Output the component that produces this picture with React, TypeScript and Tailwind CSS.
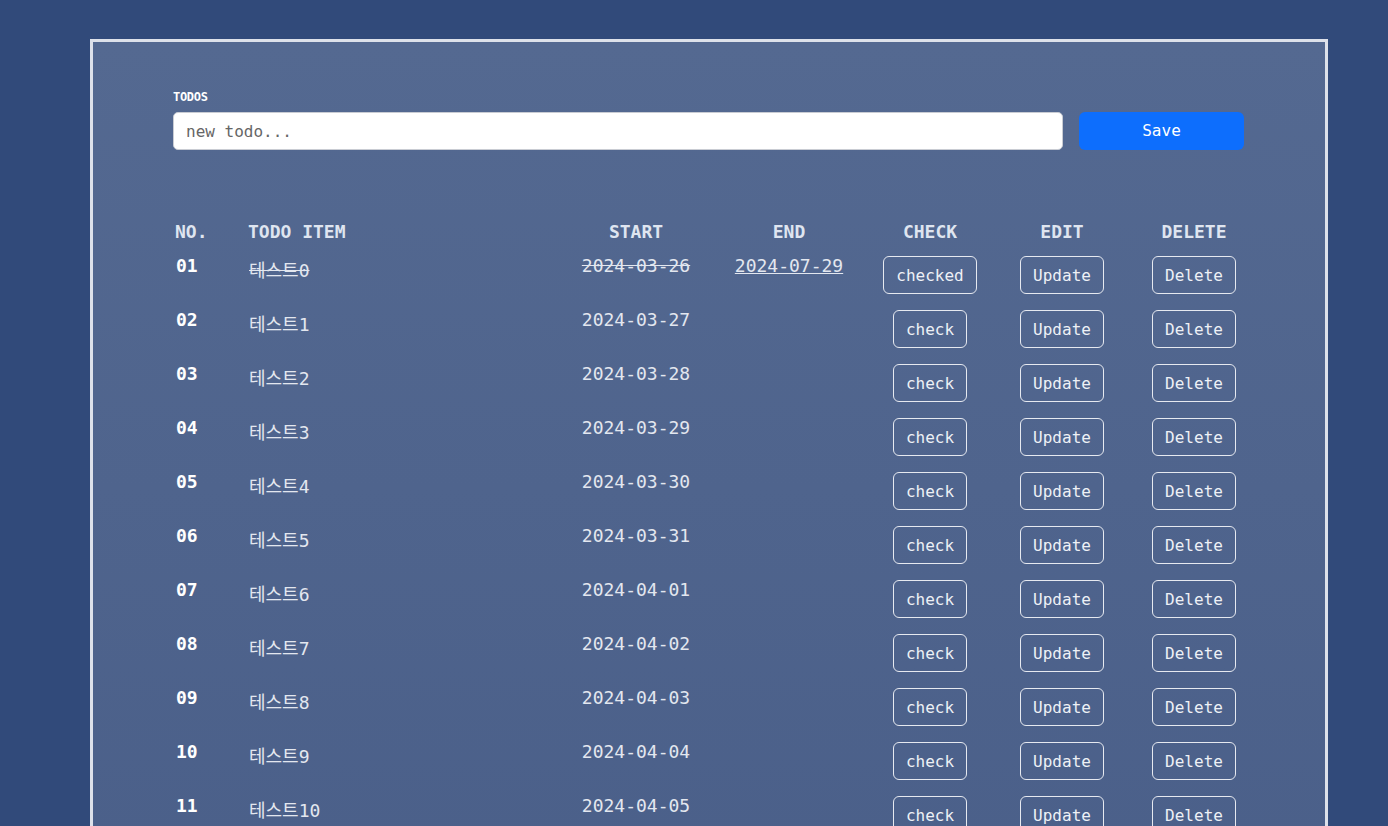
const todos = Array.from({ length: 11 }, (_, i) => {
  const start = new Date(2024, 2, 26 + i);
  const pad = (n: number) => String(n).padStart(2, "0");
  return {
    no: pad(i + 1),
    item: `테스트${i}`,
    start: `${start.getFullYear()}-${pad(start.getMonth() + 1)}-${pad(start.getDate())}`,
    end: i === 0 ? "2024-07-29" : "",
    checked: i === 0,
  };
});

const btn =
  "h-[38px] px-3 rounded-md border border-[#e6e9f0] text-[16px] text-[#eef1f6] bg-transparent";

const App = () => {
  return (
    <div
      className="min-h-screen w-full bg-[#314a7a] pt-[39px] overflow-hidden"
      style={{ fontFamily: '"DejaVu Sans Mono", "Noto Sans CJK KR", monospace' }}
    >
      <div className="ml-[90px] w-[1238px] h-[900px] border-[3px] border-[#dde1ea] bg-gradient-to-b from-[#546991] to-[#4a5f89] px-[80px] pt-[47px]">
        <label className="block text-[12px] font-bold text-white leading-4 tracking-tight">
          TODOS
        </label>
        <div className="flex items-center mt-[7px] w-[1071px]">
          <input
            placeholder="new todo..."
            className="h-[38px] w-[890px] rounded-[5px] border border-[#c9ccd3] bg-white px-3 text-[16px] text-[#333] placeholder:text-[#666] outline-none"
          />
          <button className="ml-4 h-[38px] w-[165px] rounded-md bg-[#0d6efd] text-[16px] text-white">
            Save
          </button>
        </div>

        <div className="mt-[68px] w-[1071px]">
          <div className="grid grid-cols-[75px_312px_152px_154px_128px_136px_128px] text-[18px] leading-[27px] font-bold text-[#dfe5f0]">
            <div className="pl-0.5">NO.</div>
            <div>TODO ITEM</div>
            <div className="text-center">START</div>
            <div className="text-center">END</div>
            <div className="text-center">CHECK</div>
            <div className="text-center">EDIT</div>
            <div className="text-center">DELETE</div>
          </div>

          <div className="mt-[7px]">
            {todos.map((t) => (
              <div
                key={t.no}
                className="grid grid-cols-[75px_312px_152px_154px_128px_136px_128px] h-[54px] items-start text-[18px] leading-[27px]"
              >
                <div className="pl-[3px] font-bold text-white">{t.no}</div>
                <div
                  className={`pt-[5px] pl-px text-[#e3e7ef] ${t.checked ? "line-through" : ""}`}
                >
                  {t.item}
                </div>
                <div
                  className={`text-center text-[#e3e7ef] ${t.checked ? "line-through" : ""}`}
                >
                  {t.start}
                </div>
                <div className="text-center text-[#e3e7ef] underline">{t.end}</div>
                <div className="flex justify-center pt-1">
                  <button className={btn}>{t.checked ? "checked" : "check"}</button>
                </div>
                <div className="flex justify-center pt-1">
                  <button className={btn}>Update</button>
                </div>
                <div className="flex justify-center pt-1">
                  <button className={btn}>Delete</button>
                </div>
              </div>
            ))}
          </div>
        </div>
      </div>
    </div>
  );
};

export default App;
